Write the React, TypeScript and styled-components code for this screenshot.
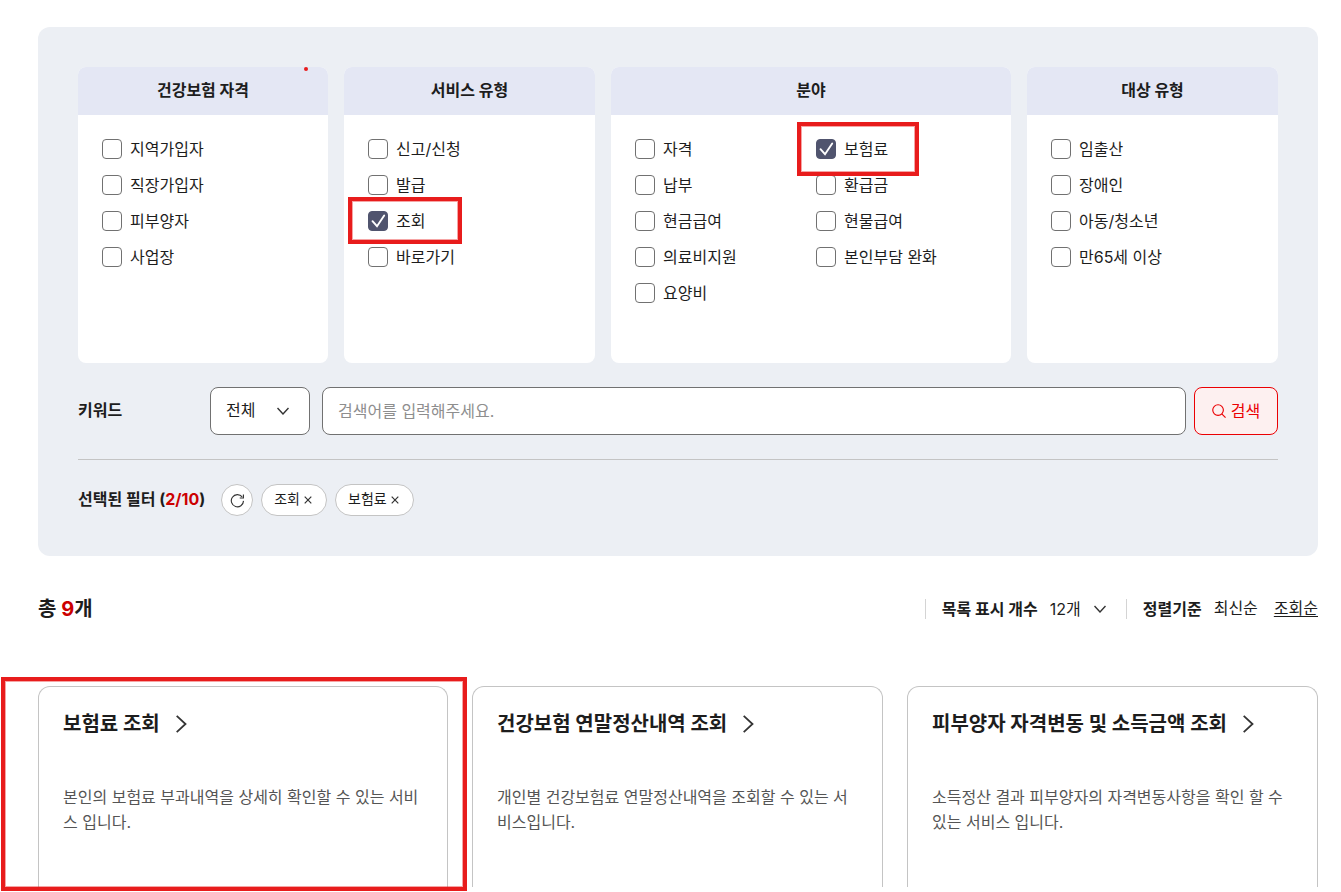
import React, { useState } from "react";
import styled, { createGlobalStyle, css } from "styled-components";

const color = {
  text: "#1d1d1d",
  sub: "#555555",
  line: "#c4c4c4",
  field: "#717171",
  panel: "#eceff4",
  head: "#e4e7f4",
  check: "#50546e",
  red: "#cc0000",
  primary: "#eb0003",
  mark: "#e81c1c",
};

const GlobalStyle = createGlobalStyle`
  *, *::before, *::after { box-sizing: border-box; }
  body {
    margin: 0;
    background: #fff;
    color: ${color.text};
    font: 400 16px/24px Inter, "Noto Sans CJK KR", sans-serif;
  }
  button, input, select { font: inherit; color: inherit; }
  h2, h3, p { margin: 0; }
`;

const Page = styled.main`
  padding: 27px 23px 0 38px;
`;

const Panel = styled.form`
  padding: 40px;
  border-radius: 12px;
  background: ${color.panel};
`;

const Groups = styled.div`
  display: grid;
  grid-template-columns: 250fr 251fr 400fr 251fr;
  gap: 16px;
`;

const Group = styled.section`
  min-height: 296px;
  border-radius: 8px;
  background: #fff;
`;

const GroupTitle = styled.h3`
  position: relative;
  padding: 11px 0 13px;
  border-radius: 8px 8px 0 0;
  background: ${color.head};
  font-size: 16px;
  line-height: 24px;
  font-weight: 700;
  text-align: center;
`;

const MarkDot = styled.span`
  position: absolute;
  top: 0;
  right: 20px;
  width: 4px;
  height: 4px;
  border-radius: 50%;
  background: ${color.mark};
`;

const Options = styled.div<{ $columns: number }>`
  display: grid;
  grid-template-columns: repeat(${(p) => p.$columns}, 1fr);
  gap: 16px 10px;
  padding: 24px;
`;

const Option = styled.label`
  position: relative;
  display: flex;
  align-items: center;
  justify-self: start;
  gap: 8px;
  height: 20px;
  line-height: 20px;
  white-space: nowrap;
`;

const CheckBox = styled.span`
  display: grid;
  width: 20px;
  height: 20px;

  > * { grid-area: 1 / 1; }
  svg { pointer-events: none; }
`;

const CheckInput = styled.input`
  appearance: none;
  width: 20px;
  height: 20px;
  margin: 0;
  border: 1px solid ${color.field};
  border-radius: 4px;
  background: #fff;

  &:checked {
    border-color: ${color.check};
    background: ${color.check};
  }
`;

const Mark = styled.span<{ $area: "service" | "field" | "card" }>`
  position: absolute;
  z-index: 1;
  border: 4px solid ${color.mark};
  outline: 1px solid #e81c1c66;
  outline-offset: -5px;
  pointer-events: none;
  ${(p) =>
    p.$area === "service" &&
    css`top: -14px; left: -20px; width: 114px; height: 47px;`}
  ${(p) =>
    p.$area === "field" &&
    css`top: -17px; left: -19px; width: 122px; height: 54px;`}
  ${(p) =>
    p.$area === "card" &&
    css`top: -9px; left: -37px; right: -19px; height: 214px;`}
`;

const SearchRow = styled.div`
  display: flex;
  align-items: center;
  margin-top: 24px;
  padding-bottom: 24px;
  border-bottom: 1px solid ${color.line};
`;

const RowLabel = styled.label`
  width: 132px;
  padding-bottom: 2px;
  font-weight: 700;
`;

const SelectBox = styled.span`
  display: grid;
  align-items: center;

  > * { grid-area: 1 / 1; }
  svg { justify-self: end; pointer-events: none; }
`;

const ScopeBox = styled(SelectBox)`
  width: 100px;
  margin-right: 12px;
  svg { margin-right: 21px; }
`;

const ScopeSelect = styled.select`
  appearance: none;
  width: 100%;
  height: 48px;
  padding: 0 15px 2px;
  border: 1px solid ${color.field};
  border-radius: 8px;
  background: #fff;
`;

const KeywordInput = styled.input`
  flex: 1;
  min-width: 0;
  height: 48px;
  margin-right: 8px;
  padding: 0 15px;
  border: 1px solid ${color.field};
  border-radius: 8px;
  background: #fff;

  &::placeholder { color: #8e8e8e; opacity: 1; }
`;

const SearchButton = styled.button`
  display: flex;
  align-items: center;
  justify-content: center;
  gap: 5px;
  width: 84px;
  height: 48px;
  padding: 0;
  border: 1px solid ${color.primary};
  border-radius: 8px;
  background: #fdf0f0;
  color: ${color.primary};
`;

const FilterRow = styled.div`
  display: flex;
  align-items: center;
  gap: 8px;
  margin-top: 24px;
`;

const FilterTitle = styled.h3`
  margin-right: 8px;
  padding-bottom: 2px;
  font-size: 16px;
  line-height: 24px;
  font-weight: 700;
`;

const Red = styled.span`
  color: ${color.red};
`;

const Chip = styled.button<{ $round?: boolean }>`
  display: flex;
  align-items: center;
  justify-content: center;
  gap: 2px;
  height: 32px;
  width: ${(p) => (p.$round ? "32px" : "auto")};
  padding: ${(p) => (p.$round ? "0" : "0 12px 2px")};
  border: 1px solid ${color.line};
  border-radius: 16px;
  background: #fff;
  font-size: 14px;
  line-height: 20px;
`;

const ListHead = styled.div`
  display: flex;
  align-items: center;
  justify-content: space-between;
  margin-top: 40px;
  height: 26px;
`;

const Total = styled.h2`
  font-size: 20px;
  line-height: 26px;
  font-weight: 700;
`;

const Tools = styled.div`
  display: flex;
`;

const Tool = styled.div`
  display: flex;
  align-items: center;
  height: 20px;
  padding-left: 16px;
  border-left: 1px solid #d4d4d4;
  line-height: 20px;
`;

const ToolLabel = styled.label`
  margin-right: 12px;
  font-weight: 700;
`;

const CountBox = styled(SelectBox)`
  width: 56px;
  margin-right: 20px;
`;

const CountSelect = styled.select`
  appearance: none;
  width: 100%;
  height: 20px;
  padding: 0 0 2px;
  border: 0;
  background: none;
`;

const SortLink = styled.a<{ $current?: boolean }>`
  padding-bottom: 2px;
  color: inherit;
  text-decoration: ${(p) => (p.$current ? "underline" : "none")};
  text-underline-offset: 2px;

  & + & { margin-left: 16px; }
`;

const Cards = styled.div`
  display: grid;
  grid-template-columns: 410fr 411fr 411fr;
  gap: 24px;
  margin-top: 64px;
  padding-bottom: 5px;
`;

const Card = styled.article`
  position: relative;
`;

const CardBody = styled.div`
  min-height: 201px;
  padding: 24px 24px 0;
  border: 1px solid ${color.line};
  border-bottom: 0;
  border-radius: 12px 12px 0 0;
`;

const CardLink = styled.a`
  display: flex;
  align-items: center;
  gap: 16px;
  color: inherit;
  font-size: 20px;
  line-height: 26px;
  font-weight: 700;
  text-decoration: none;
`;

const CardText = styled.p`
  margin-top: 48px;
  color: ${color.sub};
  line-height: 25px;
  word-break: break-all;
`;

const CheckIcon = () => (
  <svg width="20" height="20" viewBox="0 0 20 20" fill="none" stroke="#fff" strokeWidth="1.9" strokeLinecap="round" aria-hidden="true">
    <path d="M4.500 10.200 9 15.200 16.200 4.500" />
  </svg>
);

const ChevronDown = () => (
  <svg width="12" height="8" viewBox="0 0 12 8" fill="none" stroke="#333" strokeWidth="1.4" aria-hidden="true">
    <path d="M.5 1 6 7l5.500-6" />
  </svg>
);

const ChevronRight = () => (
  <svg width="11" height="18" viewBox="0 0 11 18" fill="none" stroke="#333" strokeWidth="1.8" aria-hidden="true">
    <path d="M.7.9 9.500 9 .7 17.100" />
  </svg>
);

const SearchIcon = () => (
  <svg width="14" height="14" viewBox="0 0 15 15" fill="none" stroke="currentColor" strokeWidth="1.2" aria-hidden="true">
    <circle cx="6.500" cy="6.500" r="5.700" />
    <path d="m10.500 10.500 4 4" />
  </svg>
);

const ResetIcon = () => (
  <svg width="15" height="15" viewBox="0 0 16 16" fill="none" stroke="#333" strokeWidth="1.2" aria-hidden="true">
    <path d="M14.400 8.400A6.500 6.500 0 1 1 13 4.200" />
    <path d="M14.300 1.500v3.800h-3.900" />
  </svg>
);

const CloseIcon = () => (
  <svg width="12" height="12" viewBox="0 0 12 12" fill="none" stroke="#333" strokeWidth="1.2" aria-hidden="true">
    <path d="m2.700 3.700 6.600 6.600m0-6.600-6.600 6.600" />
  </svg>
);

const groups: { title: string; options: string[]; dot?: boolean }[] = [
  { title: "건강보험 자격", options: ["지역가입자", "직장가입자", "피부양자", "사업장"], dot: true },
  { title: "서비스 유형", options: ["신고/신청", "발급", "조회", "바로가기"] },
  {
    title: "분야",
    options: ["자격", "보험료", "납부", "환급금", "현금급여", "현물급여", "의료비지원", "본인부담 완화", "요양비"],
  },
  { title: "대상 유형", options: ["임출산", "장애인", "아동/청소년", "만65세 이상"] },
];

const marks: Record<string, "service" | "field"> = { 조회: "service", 보험료: "field" };

const services = [
  { title: "보험료 조회", text: "본인의 보험료 부과내역을 상세히 확인할 수 있는 서비스 입니다.", marked: true },
  { title: "건강보험 연말정산내역 조회", text: "개인별 건강보험료 연말정산내역을 조회할 수 있는 서비스입니다." },
  { title: "피부양자 자격변동 및 소득금액 조회", text: "소득정산 결과 피부양자의 자격변동사항을 확인 할 수 있는 서비스 입니다." },
];

export default function App() {
  const [selected, setSelected] = useState<string[]>(["조회", "보험료"]);
  const toggle = (name: string) =>
    setSelected((list) => (list.includes(name) ? list.filter((n) => n !== name) : [...list, name]));

  return (
    <>
      <GlobalStyle />
      <Page>
        <Panel onSubmit={(e) => e.preventDefault()}>
          <Groups>
            {groups.map((group) => (
              <Group key={group.title}>
                <GroupTitle>
                  {group.title}
                  {group.dot && <MarkDot />}
                </GroupTitle>
                <Options $columns={group.options.length > 4 ? 2 : 1}>
                  {group.options.map((name) => (
                    <Option key={name}>
                      <CheckBox>
                        <CheckInput type="checkbox" checked={selected.includes(name)} onChange={() => toggle(name)} />
                        {selected.includes(name) && <CheckIcon />}
                      </CheckBox>
                      {name}
                      {marks[name] && <Mark $area={marks[name]} />}
                    </Option>
                  ))}
                </Options>
              </Group>
            ))}
          </Groups>
          <SearchRow>
            <RowLabel htmlFor="keyword">키워드</RowLabel>
            <ScopeBox>
              <ScopeSelect aria-label="검색 범위">
                <option>전체</option>
              </ScopeSelect>
              <ChevronDown />
            </ScopeBox>
            <KeywordInput id="keyword" type="text" placeholder="검색어를 입력해주세요." />
            <SearchButton type="submit">
              <SearchIcon />
              검색
            </SearchButton>
          </SearchRow>
          <FilterRow>
            <FilterTitle>
              선택된 필터 (<Red>{selected.length}/10</Red>)
            </FilterTitle>
            <Chip type="button" $round aria-label="초기화" onClick={() => setSelected([])}>
              <ResetIcon />
            </Chip>
            {selected.map((name) => (
              <Chip type="button" key={name} onClick={() => toggle(name)}>
                {name}
                <CloseIcon />
              </Chip>
            ))}
          </FilterRow>
        </Panel>

        <ListHead>
          <Total>
            총 <Red>9</Red>개
          </Total>
          <Tools>
            <Tool>
              <ToolLabel htmlFor="count">목록 표시 개수</ToolLabel>
              <CountBox>
                <CountSelect id="count">
                  <option>12개</option>
                </CountSelect>
                <ChevronDown />
              </CountBox>
            </Tool>
            <Tool>
              <ToolLabel as="span">정렬기준</ToolLabel>
              <SortLink href="#latest">최신순</SortLink>
              <SortLink href="#views" $current>조회순</SortLink>
            </Tool>
          </Tools>
        </ListHead>

        <Cards>
          {services.map((service) => (
            <Card key={service.title}>
              <CardBody>
                <CardLink href="#service">
                  {service.title}
                  <ChevronRight />
                </CardLink>
                <CardText>{service.text}</CardText>
              </CardBody>
              {service.marked && <Mark $area="card" />}
            </Card>
          ))}
        </Cards>
      </Page>
    </>
  );
}
